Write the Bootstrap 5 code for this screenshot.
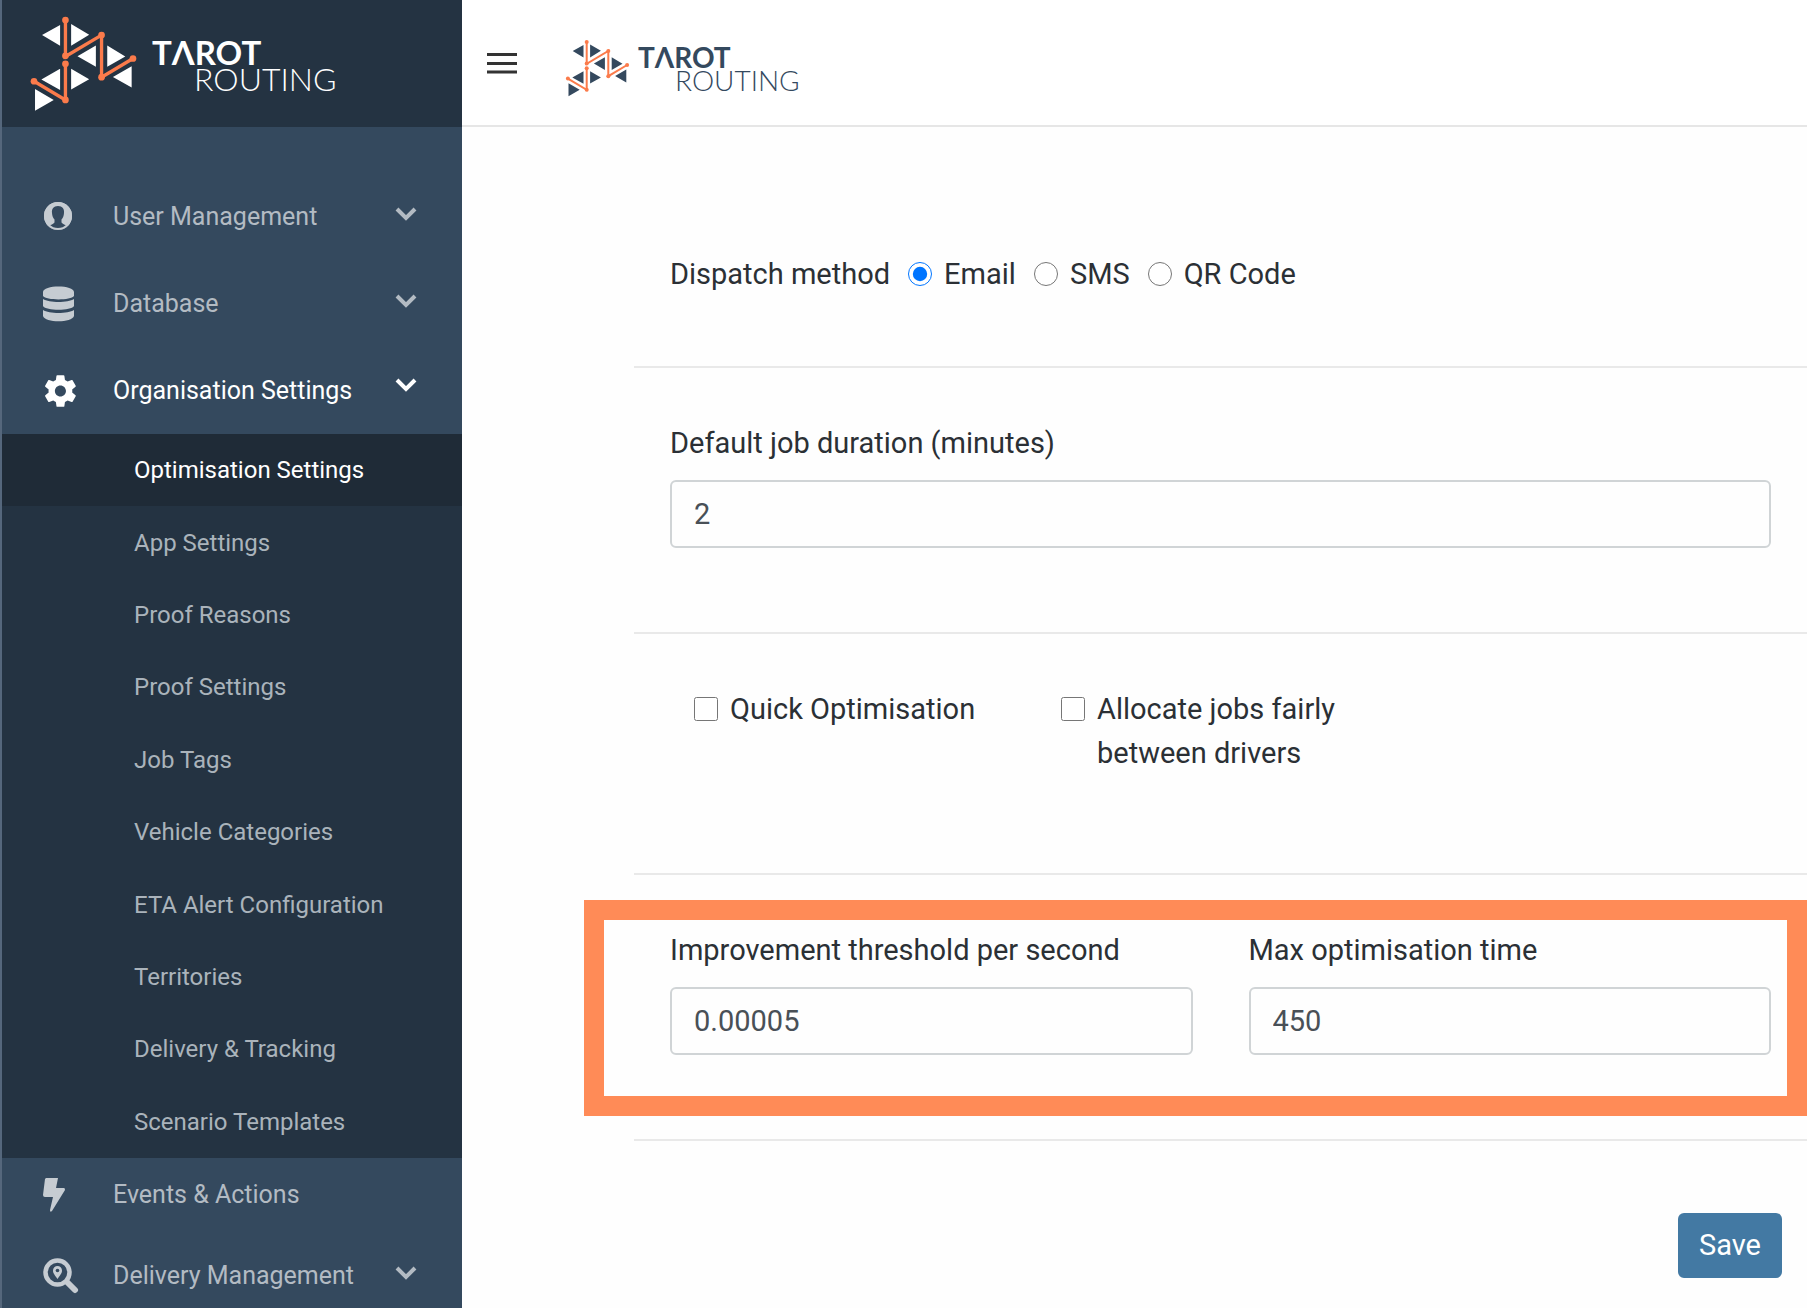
<!DOCTYPE html>
<html lang="en">
<head>
<meta charset="utf-8">
<meta name="viewport" content="width=device-width, initial-scale=1">
<title>Tarot Routing – Optimisation Settings</title>
<link href="https://cdn.jsdelivr.net/npm/bootstrap@5.3.0/dist/css/bootstrap.min.css" rel="stylesheet">
<style>
  body { font-family: Roboto, "Liberation Sans", sans-serif; font-size: 29px; line-height: 44px; color: #2b3035; background: #fefefe; }
  .side { width: 462px; background: #34495e; border-left: 2px solid #55677c; }
  .side-head, .top-head { height: 127px; }
  .side-head { background: #243342; }
  .top-head { border-bottom: 2px solid #e6e6e6; background: #fff; }
  .side-list { padding-top: 46px; }
  .side-link { height: 87px; padding: 0 45px 0 41px; color: #b3bbc3; font-size: 25px; line-height: 32px; text-decoration: none; }
  .side-link.short { height: 74px; }
  .side-link:hover, .sub-link:hover, .side-link.current, .sub-link.current { color: #fff; }
  .side-link .pic { width: 70px; flex: none; display: flex; }
  .chev { margin-bottom: 6px; }
  .current .chev { margin-bottom: 12px; }
  .sub-list { background: #243342; height: 724px; }
  .sub-link { padding-left: 132px; color: #aab3bb; font-size: 24px; line-height: 32px; text-decoration: none; }
  .sub-link.current { background: #1f2b37; }
  .menu-btn { margin-left: 24px; }
  .top-logo { margin-left: 46px; padding-top: 10px; }
  .page-body { padding-left: 172px; }
  .panel { padding: 53px 36px 84px; border-bottom: 2px solid #e9e9e9; }
  .panel.first { padding-top: 125px; padding-bottom: 70px; }
  .panel.checks { padding-bottom: 98px; }
  .field-label { display: block; margin-bottom: 15px; }
  .form-control { height: 68px; padding: 0 22px; font-size: 29px; color: #495057; border: 2px solid #d0d4d6; border-radius: 6px; background: #fefefe; }
  .pair { --bs-gutter-x: 56px; }
  .tick { width: 24px; height: 24px; margin: 0 12px 0 0; flex: none; }
  .radio-text { margin-right: 18px; }
  .checks .tick { margin-top: 10px; }
  .option-col { padding-left: 24px; padding-right: 60px; }
  .callout-frame { position: absolute; top: 25px; bottom: 23px; left: -50px; right: 0; border: 20px solid #ff8b57; pointer-events: none; }
  .btn-save { background: #4379a3; color: #fff; font-size: 29px; line-height: 43px; padding: 11px 21px; border-radius: 6px; border: 0; margin: 72px 25px 0 0; }
  .btn-save:hover { background: #386a91; color: #fff; }
</style>
<script src="https://cdn.jsdelivr.net/npm/bootstrap@5.3.0/dist/js/bootstrap.bundle.min.js" defer></script>
</head>
<body>
<svg class="d-none" aria-hidden="true">
  <symbol id="mark-tris" viewBox="90 45 320 290">
    <path d="M126 105 180 75V137ZM213 72 267 104 213 137ZM232 168 287 136V200ZM321 136 375 169 321 200ZM338 230 394 198V262ZM124 238 180 206V269ZM213 206 267 237 213 268ZM105 266 161 299 105 331Z" fill="currentColor"/>
    <g fill="none" stroke="#fb7b4b" stroke-width="10"><path d="M196 60V169L304 105V231L398 175M196 190V299L102 243"/></g>
    <g fill="#fb7b4b"><circle cx="196" cy="60" r="10"/><circle cx="196" cy="167" r="10"/><circle cx="304" cy="105" r="10"/><circle cx="304" cy="231" r="10"/><circle cx="398" cy="175" r="10"/><circle cx="196" cy="191" r="10"/><circle cx="196" cy="299" r="10"/><circle cx="102" cy="243" r="10"/></g>
  </symbol>
  <symbol id="chevron" viewBox="0 0 22 15"><path d="M2 3 11 12 20 3" fill="none" stroke="currentColor" stroke-width="4"/></symbol>
</svg>
<div class="d-flex vh-100 overflow-hidden">
  <nav class="side d-flex flex-column flex-shrink-0 overflow-hidden" aria-label="Main">
    <a href="#" class="side-head d-block flex-shrink-0 text-white" aria-label="Tarot Routing">
      <svg width="380" height="126" viewBox="2 0 380 126">
        <use href="#mark-tris" x="30" y="15" width="107" height="97"/>
        <g fill="#fff" font-family="Lato, sans-serif"><text x="152" y="65" font-size="33" font-weight="700">TΛROT</text><text x="194" y="91" font-size="32" font-weight="300">ROUTING</text></g>
      </svg>
    </a>
    <div class="side-list flex-shrink-0">
      <a href="#" class="side-link d-flex align-items-center">
        <span class="pic"><svg width="30" height="30" viewBox="0 0 30 30"><circle cx="15" cy="14" r="14" fill="#c6ccd2"/><path d="M15 4c-4.500 0-6.500 3-6 7 .2 3 1 5 2.500 6.500v3C10 22.500 7 23 5 24c6 5 14 5 20 0-2-1-5-1.500-6.500-3.500v-3C20 16 20.800 14 21 11c.5-4-1.500-7-6-7Z" fill="#34495e"/><circle cx="15" cy="14" r="13" fill="none" stroke="#c6ccd2" stroke-width="2"/></svg></span>
        <span>User Management</span><svg class="chev ms-auto" width="22" height="15"><use href="#chevron"/></svg></a>
      <a href="#" class="side-link d-flex align-items-center">
        <span class="pic"><svg width="32" height="36" viewBox="0 0 32 36" fill="#c6ccd2"><path d="M0 6C0-1.500 31-1.500 31 6v4c-3 4.500-28 4.500-31 0ZM0 13c6 4 25 4 31 0v7c-3 5-28 5-31 0ZM0 24c6 4 25 4 31 0v6c-2 7-29 7-31 0Z"/></svg></span>
        <span>Database</span><svg class="chev ms-auto" width="22" height="15"><use href="#chevron"/></svg></a>
      <a href="#" class="side-link current d-flex align-items-center" aria-expanded="true">
        <span class="pic"><svg width="38" height="38" viewBox="1 0 24 24" fill="currentColor"><path d="M19.430 12.980c.04-.32.07-.64.07-.98s-.03-.66-.07-.98l2.110-1.650c.19-.15.24-.42.12-.64l-2-3.460c-.12-.22-.39-.3-.61-.22l-2.490 1c-.52-.4-1.080-.73-1.690-.98l-.38-2.650C14.460 2.180 14.250 2 14 2h-4c-.25 0-.46.18-.49.42l-.38 2.650c-.61.25-1.170.59-1.690.98l-2.490-1c-.23-.09-.49 0-.61.22l-2 3.460c-.13.22-.07.49.12.64l2.110 1.650c-.04.32-.07.65-.07.98s.03.66.07.98l-2.110 1.650c-.19.15-.24.42-.12.64l2 3.460c.12.22.39.3.61.22l2.490-1c.52.4 1.080.73 1.690.98l.38 2.650c.03.24.24.42.49.42h4c.25 0 .46-.18.49-.42l.38-2.650c.61-.25 1.170-.59 1.690-.98l2.490 1c.23.09.49 0 .61-.22l2-3.460c.12-.22.07-.49-.12-.64l-2.110-1.650ZM12 15.500c-1.930 0-3.500-1.570-3.500-3.500s1.570-3.500 3.500-3.500 3.500 1.570 3.500 3.500-1.570 3.500-3.500 3.500Z"/></svg></span>
        <span>Organisation Settings</span><svg class="chev ms-auto" width="22" height="15"><use href="#chevron"/></svg></a>
      <div class="sub-list d-flex flex-column">
        <a href="#" class="sub-link current d-flex align-items-center flex-fill" aria-current="page">Optimisation Settings</a>
        <a href="#" class="sub-link d-flex align-items-center flex-fill">App Settings</a>
        <a href="#" class="sub-link d-flex align-items-center flex-fill">Proof Reasons</a>
        <a href="#" class="sub-link d-flex align-items-center flex-fill">Proof Settings</a>
        <a href="#" class="sub-link d-flex align-items-center flex-fill">Job Tags</a>
        <a href="#" class="sub-link d-flex align-items-center flex-fill">Vehicle Categories</a>
        <a href="#" class="sub-link d-flex align-items-center flex-fill">ETA Alert Configuration</a>
        <a href="#" class="sub-link d-flex align-items-center flex-fill">Territories</a>
        <a href="#" class="sub-link d-flex align-items-center flex-fill">Delivery &amp; Tracking</a>
        <a href="#" class="sub-link d-flex align-items-center flex-fill">Scenario Templates</a>
      </div>
      <a href="#" class="side-link short d-flex align-items-center">
        <span class="pic"><svg width="24" height="36" viewBox="0 0 24 36" fill="#c6ccd2"><path d="M3 1H15L13 11H21Q22 11 22 13L9 34Q7 36 7 33L10 20H2Q0 20 0 18L2 2Z"/></svg></span>
        <span>Events &amp; Actions</span></a>
      <a href="#" class="side-link d-flex align-items-center">
        <span class="pic"><svg width="36" height="36" viewBox="0 0 36 36"><circle cx="14.500" cy="14.500" r="12" fill="none" stroke="#c6ccd2" stroke-width="4.500"/><path d="M24 24 32 32" stroke="#c6ccd2" stroke-width="6" stroke-linecap="round"/><path d="M14.500 21C11 16 10 15 10 12.500a4.500 4.500 0 0 1 9 0C19 15 18 16 14.500 21Z" fill="#c6ccd2"/><circle cx="14.500" cy="12.500" r="1.800" fill="#34495e"/></svg></span>
        <span>Delivery Management</span><svg class="chev ms-auto" width="22" height="15"><use href="#chevron"/></svg></a>
    </div>
  </nav>
  <div class="flex-fill overflow-hidden">
    <header class="top-head d-flex align-items-center">
      <button type="button" class="menu-btn btn p-0 border-0 d-flex" aria-label="Toggle menu"><svg width="32" height="24" viewBox="0 0 32 24"><path d="M1 3.500H31M1 12.500H31M1 21H31" stroke="#333" stroke-width="3"/></svg></button>
      <a href="#" class="top-logo d-flex" aria-label="Tarot Routing">
        <svg width="250" height="60" viewBox="564 38 250 60" color="#34495e">
          <use href="#mark-tris" x="565" y="39" width="65" height="58"/>
          <g fill="#34495e" font-family="Lato, sans-serif"><text x="638" y="68" font-size="28" font-weight="700">TΛROT</text><text x="675" y="91" font-size="28" font-weight="300">ROUTING</text></g>
        </svg>
      </a>
    </header>
    <main class="page-body">
      <form>
        <div class="panel first d-flex flex-wrap align-items-center" role="radiogroup" aria-labelledby="dispatch">
          <span id="dispatch" class="radio-text">Dispatch method</span>
          <input class="tick" type="radio" name="dispatch" id="by-email" checked><label class="radio-text" for="by-email">Email</label>
          <input class="tick" type="radio" name="dispatch" id="by-sms"><label class="radio-text" for="by-sms">SMS</label>
          <input class="tick" type="radio" name="dispatch" id="by-qr"><label for="by-qr">QR Code</label>
        </div>
        <div class="panel">
          <label class="field-label" for="duration">Default job duration (minutes)</label>
          <input class="form-control" id="duration" type="text" inputmode="numeric" value="2">
        </div>
        <div class="panel checks">
          <div class="row gx-0">
            <div class="col-4 option-col d-flex align-items-start"><input class="tick" type="checkbox" id="quick"><label for="quick">Quick Optimisation</label></div>
            <div class="col-4 option-col d-flex align-items-start"><input class="tick" type="checkbox" id="fair"><label for="fair">Allocate jobs fairly between drivers</label></div>
          </div>
        </div>
        <div class="panel position-relative">
          <div class="row pair">
            <div class="col-6"><label class="field-label" for="threshold">Improvement threshold per second</label><input class="form-control" id="threshold" type="text" inputmode="decimal" value="0.00005"></div>
            <div class="col-6"><label class="field-label" for="max-time">Max optimisation time</label><input class="form-control" id="max-time" type="text" inputmode="numeric" value="450"></div>
          </div>
          <div class="callout-frame"></div>
        </div>
        <div class="d-flex justify-content-end"><button type="submit" class="btn btn-save">Save</button></div>
      </form>
    </main>
  </div>
</div>
</body>
</html>
